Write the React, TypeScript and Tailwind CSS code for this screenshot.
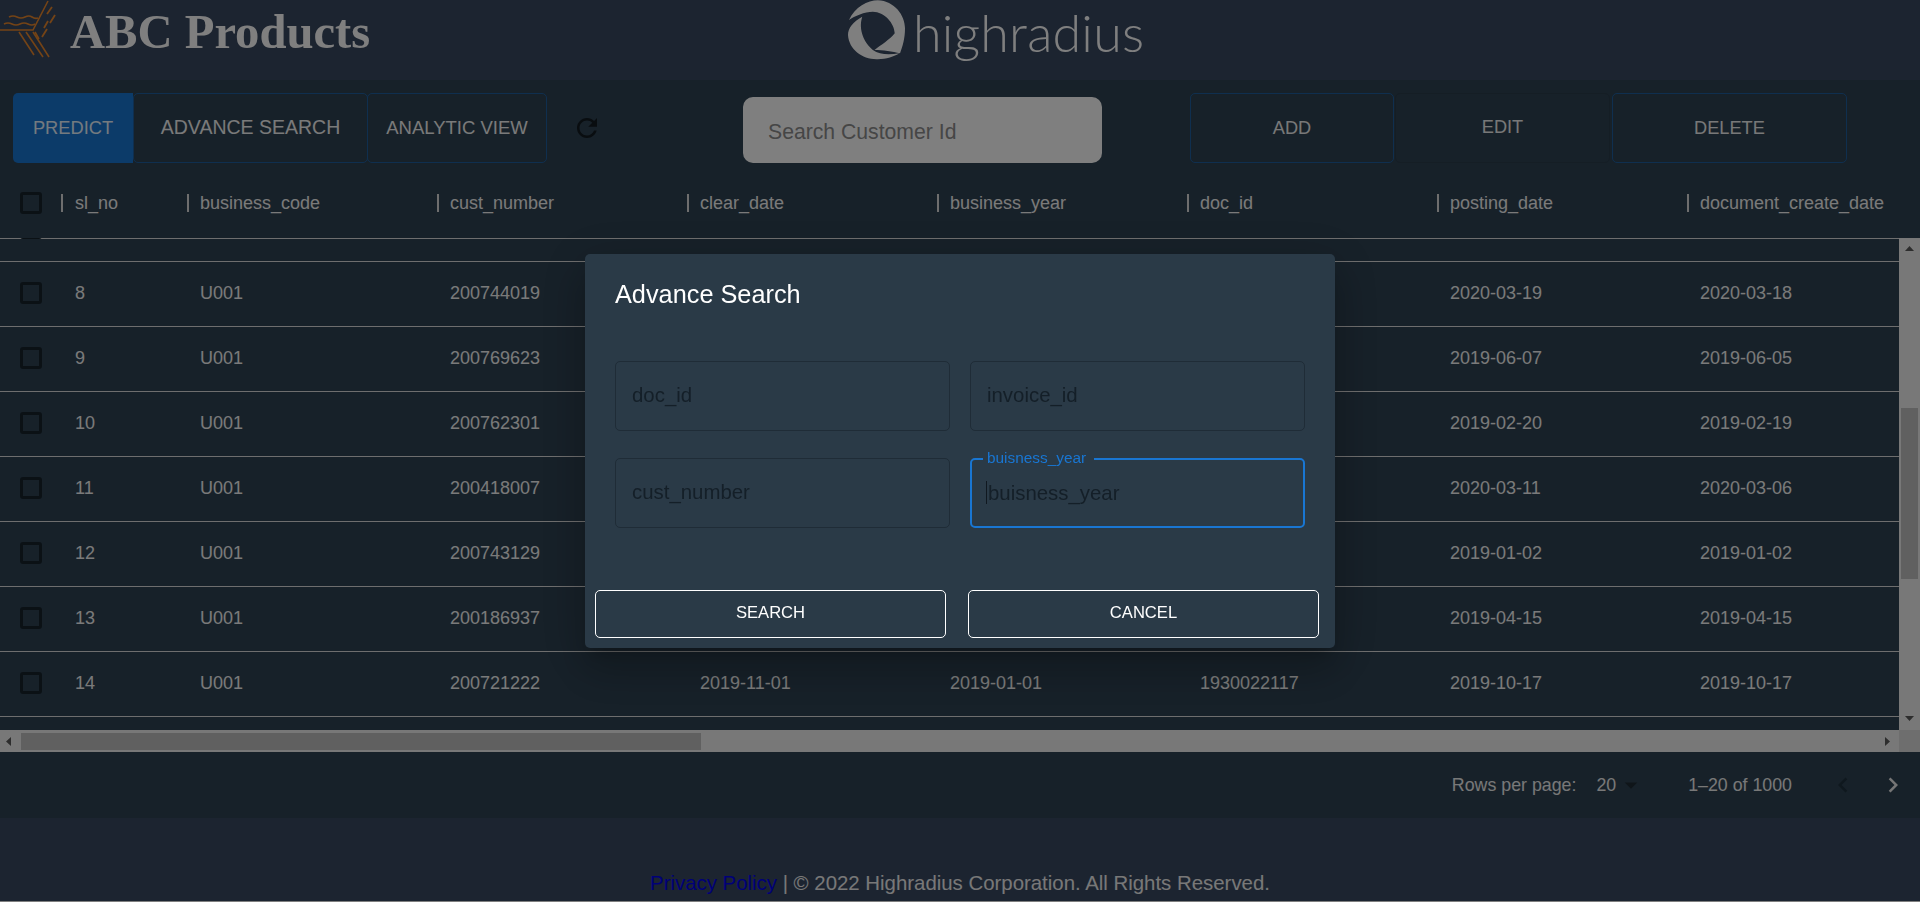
const cols = ["sl_no", "business_code", "cust_number", "clear_date", "business_year", "doc_id", "posting_date", "document_create_date"];
const rows = [
  ["8", "U001", "200744019", "2020-04-06", "2020-01-01", "1930656420", "2020-03-19", "2020-03-18"],
  ["9", "U001", "200769623", "2019-06-21", "2019-01-01", "1929419482", "2019-06-07", "2019-06-05"],
  ["10", "U001", "200762301", "2019-03-07", "2019-01-01", "1928810011", "2019-02-20", "2019-02-19"],
  ["11", "U001", "200418007", "2020-03-26", "2020-01-01", "1930629921", "2020-03-11", "2020-03-06"],
  ["12", "U001", "200743129", "2019-01-17", "2019-01-01", "1928556742", "2019-01-02", "2019-01-02"],
  ["13", "U001", "200186937", "2019-04-30", "2019-01-01", "1929130658", "2019-04-15", "2019-04-15"],
  ["14", "U001", "200721222", "2019-11-01", "2019-01-01", "1930022117", "2019-10-17", "2019-10-17"],
];

function Checkbox() {
  return <span className="block w-[22px] h-[22px] rounded-[3px] border-[3px] border-[#16222b] shrink-0" />;
}

function AbcLogo() {
  return (
    <svg viewBox="0 0 60 70" className="w-[60px] h-[70px] shrink-0" fill="none" stroke="#e8872c" strokeWidth="1.6">
      <path d="M0 30H33L48 1" />
      <path d="M19 32L34 55M26 32L43 57M33 32L49 57" />
      <path d="M9 17q4-2 8 0t8 0t7 0t6 1" />
      <path d="M4 24q4-2 8 0t8 0t8 0t7 0" />
      <path d="M52 7L47 14M55 15L50 23M48 21L44 28M47 29L42 37" strokeWidth="1.8" />
      <path d="M35 32L39 39" />
    </svg>
  );
}

function HrIcon() {
  return (
    <svg viewBox="25 0 172 180" className="w-[57px] h-[60px] shrink-0" fill="#ffffff">
      <path d="M28 60C45 20 85 0 115 0C165 2 197 45 197 85C197 115 190 140 182 160C160 155 130 150 105 150C125 135 150 120 166 100C165 70 135 35 100 35C75 35 45 48 28 60Z" />
      <path d="M68 50C40 65 25 85 25 105C28 150 70 180 115 178C140 178 165 170 180 160C150 165 120 165 100 150C75 130 55 90 68 50Z" />
    </svg>
  );
}

function Triangle({ dir }: { dir: "up" | "down" | "left" | "right" }) {
  const d = { up: "M0 5L4.5 0L9 5Z", down: "M0 0H9L4.5 5Z", left: "M5 0V9L0 4.5Z", right: "M0 0V9L5 4.5Z" }[dir];
  const horizontal = dir === "up" || dir === "down";
  return (
    <svg viewBox={horizontal ? "0 0 9 5" : "0 0 5 9"} className={horizontal ? "w-[9px] h-[5px]" : "w-[5px] h-[9px]"} fill="#5a5a5a">
      <path d={d} />
    </svg>
  );
}

function OutlineButton({ label, className }: { label: string; className: string }) {
  return (
    <button className={`flex items-center justify-center h-[70px] rounded-[5px] border pt-[1px] text-[18.2px] text-[#f0f0f0] ${className}`}>
      {label}
    </button>
  );
}

function Field({ placeholder }: { placeholder: string }) {
  return (
    <input
      readOnly
      placeholder={placeholder}
      className="w-full h-[70px] rounded-[5px] border border-[#1f2c37] bg-transparent pl-[16px] pb-[2px] text-[20.4px] outline-none placeholder:text-[#141f28] placeholder:opacity-100"
    />
  );
}

const gridClass = "grid grid-cols-[61px_126px_250px_250px_250px_250px_250px_250px_250px] w-[1937px]";

export default function App() {
  return (
    <div className="h-[901px] w-[1920px] overflow-hidden bg-[#384860] text-white [font-family:'Liberation_Sans',Arial,sans-serif]">
      <header className="flex h-[80px] items-start">
        <div className="flex w-[848px] shrink-0 items-start">
          <AbcLogo />
          <h1 className="ml-[10px] mt-[4px] text-[48.6px] leading-[56px] font-bold [font-family:'Liberation_Serif',serif]">ABC Products</h1>
        </div>
        <div className="flex items-start">
          <HrIcon />
          <span className="ml-[8px] mt-[2px] text-[52px] leading-[60px] font-light tracking-[0.2px] [font-family:Lato,sans-serif]">highradius</span>
        </div>
      </header>

      <main className="h-[738px] bg-[#2e4252]">
        <div className="flex h-[83px] items-start pl-[13px] pt-[13px]">
          <button className="flex h-[70px] w-[120px] items-center justify-center rounded-l-[5px] bg-[#1976d2] text-[18.3px] text-[#e8f4ff]">PREDICT</button>
          <button className="flex h-[70px] w-[235px] items-center justify-center rounded-[5px] border border-[#1f5f9f] text-[19.5px] text-[#f4f4f4]">ADVANCE SEARCH</button>
          <button className="-ml-px flex h-[70px] w-[180px] items-center justify-center rounded-[5px] border border-[#1f5f9f] text-[18.5px] text-[#f4f4f4]">ANALYTIC VIEW</button>
          <svg viewBox="0 0 24 24" className="ml-[25px] mt-[20px] h-[30px] w-[30px] shrink-0" fill="#121a20">
            <path d="M17.65 6.35C16.2 4.9 14.21 4 12 4c-4.42 0-7.99 3.58-7.99 8s3.57 8 7.99 8c3.73 0 6.84-2.55 7.73-6h-2.08c-.82 2.33-3.04 4-5.65 4-3.31 0-6-2.69-6-6s2.69-6 6-6c1.66 0 3.14.69 4.22 1.78L13 11h7V4l-2.35 2.35z" />
          </svg>
          <input
            readOnly
            placeholder="Search Customer Id"
            className="ml-[141px] mt-[4px] h-[66px] w-[359px] rounded-[10px] bg-white pl-[25px] pt-[3px] text-[21.2px] outline-none placeholder:text-[#8c8c8c] placeholder:opacity-100"
          />
          <OutlineButton label="ADD" className="ml-[88px] w-[204px] border-[#1f5f9f]" />
          <button className="ml-px flex h-[70px] w-[215px] items-center justify-center rounded-[5px] border border-[#2a3c4a] pb-[1px] text-[18.2px] text-[#f0f0f0]">EDIT</button>
          <OutlineButton label="DELETE" className="ml-[2px] w-[235px] border-[#1f5f9f]" />
        </div>

        <div className="h-[76px] overflow-hidden border-b border-[#dcdcdc]">
          <div className={`${gridClass} h-[75px] items-center pt-[5px] text-[18px] text-[#f4f4f4]`}>
            <div className="pl-[20px]"><Checkbox /></div>
            {cols.map((c, i) => (
              <div key={c} className="flex items-center">
                <span className="h-[18px] w-[2px] shrink-0 bg-[#dcdcdc]" />
                <span className={`${i === 0 ? "ml-[12px]" : "ml-[11px]"} whitespace-nowrap`}>{c}</span>
              </div>
            ))}
          </div>
        </div>

        <div className="relative z-10 -mt-px flex h-[492px]">
          <div className="h-full w-[1899px] overflow-hidden">
            <div className="-mt-[41px]">
              <div className={`${gridClass} h-[65px] items-center border-b border-[#dcdcdc] pb-[3px]`}>
                <div className="pl-[20px]"><Checkbox /></div>
              </div>
              {rows.map((r) => (
                <div key={r[0]} className={`${gridClass} h-[65px] items-center border-b border-[#dcdcdc] pb-[3px] text-[18px] text-[#f4f4f4]`}>
                  <div className="pl-[20px]"><Checkbox /></div>
                  {r.map((v, i) => (
                    <div key={i} className={`${i === 0 ? "pl-[14px]" : "pl-[13px]"} pt-[2px] whitespace-nowrap`}>{v}</div>
                  ))}
                </div>
              ))}
            </div>
          </div>
          <div className="flex w-[21px] shrink-0 flex-col items-center bg-[#f1f1f1]">
            <div className="flex h-[21px] items-center justify-center"><Triangle dir="up" /></div>
            <div className="mt-[149px] h-[171px] w-[17px] bg-[#c1c1c1]" />
            <div className="mt-auto mb-px flex h-[21px] items-center justify-center"><Triangle dir="down" /></div>
          </div>
        </div>

        <div className="flex h-[22px]">
          <div className="flex w-[1899px] items-center bg-[#f1f1f1]">
            <div className="flex w-[21px] shrink-0 items-center justify-center pr-[4px]"><Triangle dir="left" /></div>
            <div className="h-[17px] w-[680px] bg-[#c1c1c1]" />
            <div className="ml-auto flex w-[21px] justify-center pr-[3px]"><Triangle dir="right" /></div>
          </div>
          <div className="w-[21px] bg-[#dcdcdc]" />
        </div>

        <div className="flex h-[66px] items-center justify-end pr-[12px] text-[17.8px] text-[#f0f0f0]">
          <span>Rows per page:</span>
          <span className="ml-[20px]">20</span>
          <svg viewBox="0 0 24 24" className="h-[30px] w-[30px]" fill="#1e2a33"><path d="M7 10l5 5 5-5z" /></svg>
          <span className="ml-[42px]">1–20 of 1000</span>
          <svg viewBox="0 0 24 24" className="ml-[36px] h-[30px] w-[30px]" fill="#1e303c"><path d="M15.41 7.41 14 6l-6 6 6 6 1.41-1.41L10.83 12z" /></svg>
          <svg viewBox="0 0 24 24" className="ml-[20px] h-[30px] w-[30px]" fill="#ececec"><path d="M10 6 8.59 7.41 13.17 12l-4.58 4.59L10 18l6-6z" /></svg>
        </div>
      </main>

      <footer className="flex h-[83px] items-end justify-center pb-[6px] text-[20.4px] leading-[24px] text-[#f0f0f0]">
        <p><a className="text-[#0000ee]">Privacy Policy</a> | © 2022 Highradius Corporation. All Rights Reserved.</p>
      </footer>

      <div className="fixed inset-0 z-20 flex items-center justify-center bg-black/50">
        <div role="dialog" className="h-[394px] w-[750px] rounded-[5px] bg-[#2a3a47] pt-[25px] shadow-[0_11px_15px_-7px_rgba(0,0,0,0.2),0_24px_38px_3px_rgba(0,0,0,0.14),0_9px_46px_8px_rgba(0,0,0,0.12)]">
          <h2 className="pl-[30px] text-[25.3px] leading-[30px]">Advance Search</h2>
          <div className="mt-[52px] grid grid-cols-2 gap-x-[20px] gap-y-[27px] pl-[30px] pr-[30px]">
            <Field placeholder="doc_id" />
            <Field placeholder="invoice_id" />
            <Field placeholder="cust_number" />
            <div className="relative">
              <input
                readOnly
                placeholder="buisness_year"
                className="h-[70px] w-full rounded-[5px] border-2 border-[#1976d2] bg-transparent pl-[16px] text-[20.4px] outline-none placeholder:text-[#141f28] placeholder:opacity-100"
              />
              <span className="absolute left-[13px] top-[-8px] bg-[#2a3a47] pl-[4px] pr-[8px] text-[15.4px] leading-[16px] text-[#1976d2]">buisness_year</span>
              <span className="absolute left-[16px] top-[23px] h-[23px] w-px bg-[#101820]" />
            </div>
          </div>
          <div className="mt-[62px] flex gap-[22px] pl-[10px]">
            <button className="flex h-[48px] w-[351px] items-center justify-center rounded-[5px] border border-white pb-[1px] text-[16.6px]">SEARCH</button>
            <button className="flex h-[48px] w-[351px] items-center justify-center rounded-[5px] border border-white pb-[1px] text-[16.6px]">CANCEL</button>
          </div>
        </div>
      </div>
    </div>
  );
}
